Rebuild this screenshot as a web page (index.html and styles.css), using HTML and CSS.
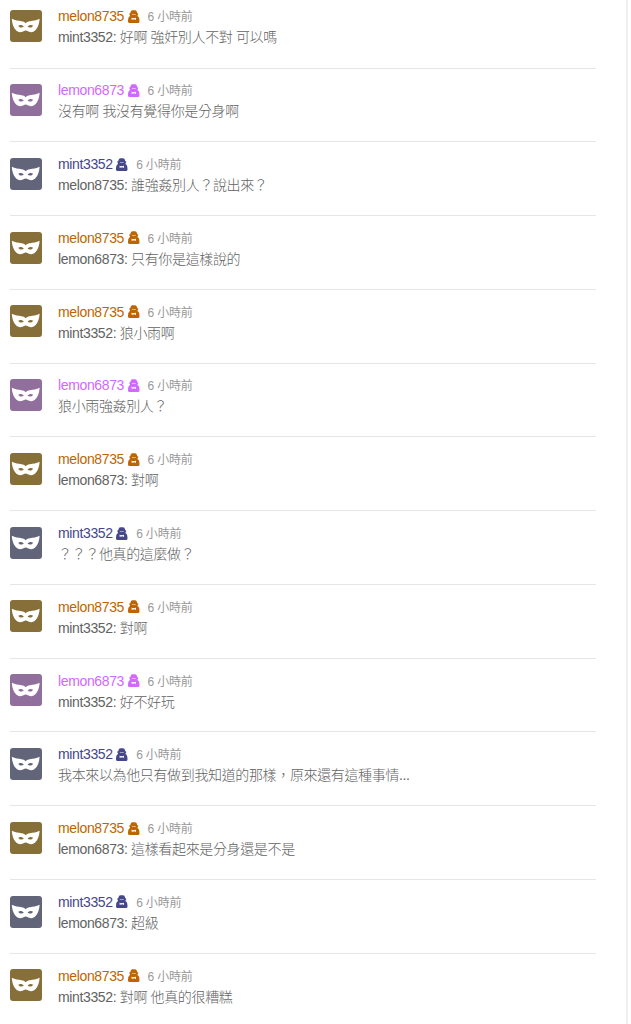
FILE: index.html
```html
<!DOCTYPE html>
<html lang="zh-Hant">
<head>
    <meta charset="UTF-8">
    <meta name="viewport" content="width=device-width, initial-scale=1.0">
    <title>留言</title>
    <link rel="stylesheet" href="styles.css">
</head>
<body>

    <!-- shared icons -->
    <svg class="icons">
        <symbol id="mask" viewBox="0 0 32 32">
            <path fill-rule="evenodd" d="M1.8 8.8C5 10.7 8.5 10.8 11.5 11.2C13.8 11.5 14.7 12.3 15.7 13.2C16.7 12.3 17.6 11.5 19.9 11.2C23 10.8 26.5 10.7 29.6 8.8C29.3 14.8 26.8 21.8 21.3 22.2C18 22.3 17.3 20.6 15.7 20.6C14.1 20.6 13.4 22.3 10.1 22.2C4.6 21.8 2.1 14.8 1.8 8.8ZM8.3 15.7C9.2 17.6 12 18.2 13.8 16.8C12.5 14.8 10 14.5 8.3 15.7ZM17.6 16.8C19.4 18.2 22.2 17.6 23.1 15.7C21.4 14.5 18.9 14.8 17.6 16.8Z"/>
        </symbol>
        <symbol id="agent" viewBox="0 0 12 13">
            <path fill-rule="evenodd" d="M2.2 3.2L3 1C3.5 0 4.6 .1 5.7 .3C6.8 .1 8 0 8.5 1L9.3 3.2L10.2 3.6V4.5L9.6 5V6.2L10.5 6.8C11.3 8 11.5 9.6 11.5 11.6Q11.5 12.9 10.4 12.9H1.1Q0 12.9 0 11.6C0 9.6 .2 8 1 6.8L1.9 6.2V5L1.3 4.5V3.6ZM3.8 3.9V4.4H7.8V3.9ZM3.6 7.6V9.7H4.4L5 9.2L5.8 9.7L6.6 9.2L7.2 9.7H8V7.6L7 8.3L5.8 7.9L4.6 8.3Z"/>
        </symbol>
    </svg>

    <div class="panel" id="comments"></div>

    <script>
        // author, message
        const comments = [
            ["melon8735", "mint3352: 好啊 強奸別人不對 可以嗎"],
            ["lemon6873", "沒有啊 我沒有覺得你是分身啊"],
            ["mint3352", "melon8735: 誰強姦別人？說出來？"],
            ["melon8735", "lemon6873: 只有你是這樣說的"],
            ["melon8735", "mint3352: 狼小雨啊"],
            ["lemon6873", "狼小雨強姦別人？"],
            ["melon8735", "lemon6873: 對啊"],
            ["mint3352", "？？？他真的這麼做？"],
            ["melon8735", "mint3352: 對啊"],
            ["lemon6873", "mint3352: 好不好玩"],
            ["mint3352", "我本來以為他只有做到我知道的那樣，原來還有這種事情..."],
            ["melon8735", "lemon6873: 這樣看起來是分身還是不是"],
            ["mint3352", "lemon6873: 超級"],
            ["melon8735", "mint3352: 對啊 他真的很糟糕"]
        ];

        document.getElementById("comments").innerHTML = comments.map(([author, message]) => `
            <div class="comment ${author}">
                <svg class="avatar"><use href="#mask"/></svg>
                <div class="content">
                    <div class="meta">
                        <span class="author">${author}</span>
                        <svg class="badge"><use href="#agent"/></svg>
                        <span class="time">6 小時前</span>
                    </div>
                    <div class="message">${message}</div>
                </div>
            </div>`).join("");
    </script>

</body>
</html>
```
FILE: styles.css
```css
body {
    margin: 0;
    height: 1024px;
    overflow: hidden;
    background: #fff;
    font-family: "Liberation Sans", Arial, "Noto Sans CJK TC", sans-serif;
    font-size: 14px;
    font-weight: 300;
    letter-spacing: -0.36px;
}
.icons {
    display: none;
}
.panel {
    box-sizing: border-box;
    width: 628px;
    height: 1024px;
    padding: 0 30px 0 10px;
    border-right: 2px solid #f0f0f0;
    overflow: hidden;
}
.comment {
    box-sizing: border-box;
    display: flex;
    height: 73.77px;
    padding-top: 15.5px;
    border-bottom: 1px solid #e6e6e6;
}
.comment:first-child {
    height: 68.6px;
    padding-top: 10px;
}
.avatar {
    width: 32px;
    height: 32px;
    margin-right: 16px;
    border-radius: 3px;
    fill: #fff;
    flex: none;
}
.content {
    margin-top: -3.7px;
    white-space: nowrap;
}
.meta {
    display: flex;
    height: 21px;
    line-height: 21px;
}
.badge {
    width: 12px;
    height: 13px;
    margin: 3.5px 8px 0 3.5px;
    fill: currentColor;
}
.message {
    color: #626262;
    height: 21px;
    line-height: 21px;
}

/* user colors */
.melon8735 .meta {
    color: #bd6500;
}
.melon8735 .avatar {
    background: #866f38;
}
.lemon6873 .meta {
    color: #d168ff;
}
.lemon6873 .avatar {
    background: #906f9c;
}
.mint3352 .meta {
    color: #45478a;
}
.mint3352 .avatar {
    background: #626579;
}
.comment .time {
    color: #999;
    font-size: 12px;
    font-weight: 400;
    line-height: 22px;
    letter-spacing: -0.2px;
}
```
